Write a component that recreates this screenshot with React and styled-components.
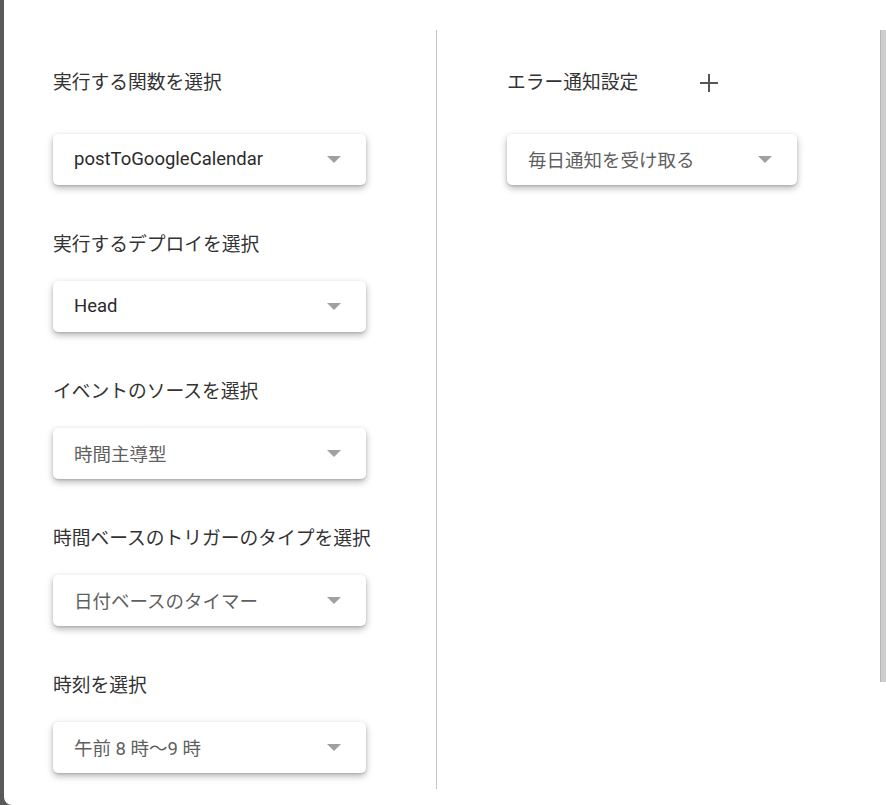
import React from "react";
import styled, { createGlobalStyle } from "styled-components";

const GlobalStyle = createGlobalStyle`
  html, body {
    margin: 0;
    padding: 0;
    background: #5a5a5a;
    overflow: hidden;
  }
  body {
    font-family: Roboto, "Noto Sans CJK JP", sans-serif;
  }
`;

const Dialog = styled.div`
  margin-left: 4px;
  height: 805px;
  box-sizing: border-box;
  padding-top: 30px;
  background: #fff;
  border-bottom-left-radius: 8px;
  overflow: hidden;
`;

const Body = styled.div`
  display: flex;
  height: 759px;
`;

const Column = styled.div`
  box-sizing: border-box;
  width: ${(p) => p.width || "auto"};
  flex: ${(p) => (p.width ? "none" : "1")};
  padding-left: ${(p) => p.inset}px;
  padding-top: 29px;
  overflow: hidden;
  display: flex;
  flex-direction: column;
`;

const Divider = styled.div`
  width: 1px;
  background: #c4c4c4;
`;

const ScrollTrack = styled.div`
  width: 6px;
  flex: none;
`;

const Thumb = styled.div`
  height: 652px;
  background: #cdcdcd;
  border-left: 1px solid #b5b5b5;
  box-sizing: border-box;
`;

const Group = styled.div`
  display: flex;
  flex-direction: column;
  margin-bottom: 48px;
`;

const HeaderRow = styled.div`
  display: flex;
  align-items: center;
  height: 48px;
  gap: 47px;
  margin-bottom: 27px;
`;

const Label = styled.div`
  font-size: 18.75px;
  line-height: 24px;
  color: #333;
  margin-bottom: ${(p) => (p.first ? 0 : 24)}px;
  white-space: nowrap;
`;

const IconButton = styled.button`
  width: 48px;
  height: 48px;
  border: none;
  background: none;
  padding: 0;
  display: flex;
  align-items: center;
  justify-content: center;
  cursor: pointer;
`;

const Select = styled.div`
  box-sizing: border-box;
  width: ${(p) => p.width}px;
  height: 51px;
  flex: none;
  display: flex;
  align-items: center;
  justify-content: space-between;
  padding: 0 25px 1px 21px;
  background: #fff;
  border-radius: 5px;
  box-shadow: 0 3px 7px rgba(0, 0, 0, 0.3), 0 1px 2px rgba(0, 0, 0, 0.12);
`;

const Value = styled.span`
  font-size: 18.5px;
  color: ${(p) => (p.muted ? "#5f5f5f" : "#2b2b2b")};
  white-space: nowrap;
`;

const Arrow = styled.span`
  width: 0;
  height: 0;
  border-left: 7px solid transparent;
  border-right: 7px solid transparent;
  border-top: 7px solid #a0a0a0;
`;

const Dropdown = ({ value, muted, width = 313 }) => (
  <Select width={width}>
    <Value muted={muted}>{value}</Value>
    <Arrow />
  </Select>
);

const PlusIcon = () => (
  <svg width="20" height="20" viewBox="0 0 20 20">
    <path d="M10 1v18M1 10h18" stroke="#555" strokeWidth="2" fill="none" />
  </svg>
);

const leftGroups = [
  { label: "実行するデプロイを選択", value: "Head" },
  { label: "イベントのソースを選択", value: "時間主導型", muted: true },
  { label: "時間ベースのトリガーのタイプを選択", value: "日付ベースのタイマー", muted: true },
  { label: "時刻を選択", value: "午前 8 時〜9 時", muted: true },
];

export default function App() {
  return (
    <>
      <GlobalStyle />
      <Dialog>
        <Body>
          <Column width="432px" inset={49}>
            <Group>
              <HeaderRow>
                <Label first>実行する関数を選択</Label>
              </HeaderRow>
              <Dropdown value="postToGoogleCalendar" />
            </Group>
            {leftGroups.map((g) => (
              <Group key={g.label}>
                <Label>{g.label}</Label>
                <Dropdown value={g.value} muted={g.muted} />
              </Group>
            ))}
          </Column>
          <Divider />
          <Column inset={70}>
            <Group>
              <HeaderRow>
                <Label first>エラー通知設定</Label>
                <IconButton aria-label="追加">
                  <PlusIcon />
                </IconButton>
              </HeaderRow>
              <Dropdown value="毎日通知を受け取る" muted width={290} />
            </Group>
          </Column>
          <ScrollTrack>
            <Thumb />
          </ScrollTrack>
        </Body>
      </Dialog>
    </>
  );
}
